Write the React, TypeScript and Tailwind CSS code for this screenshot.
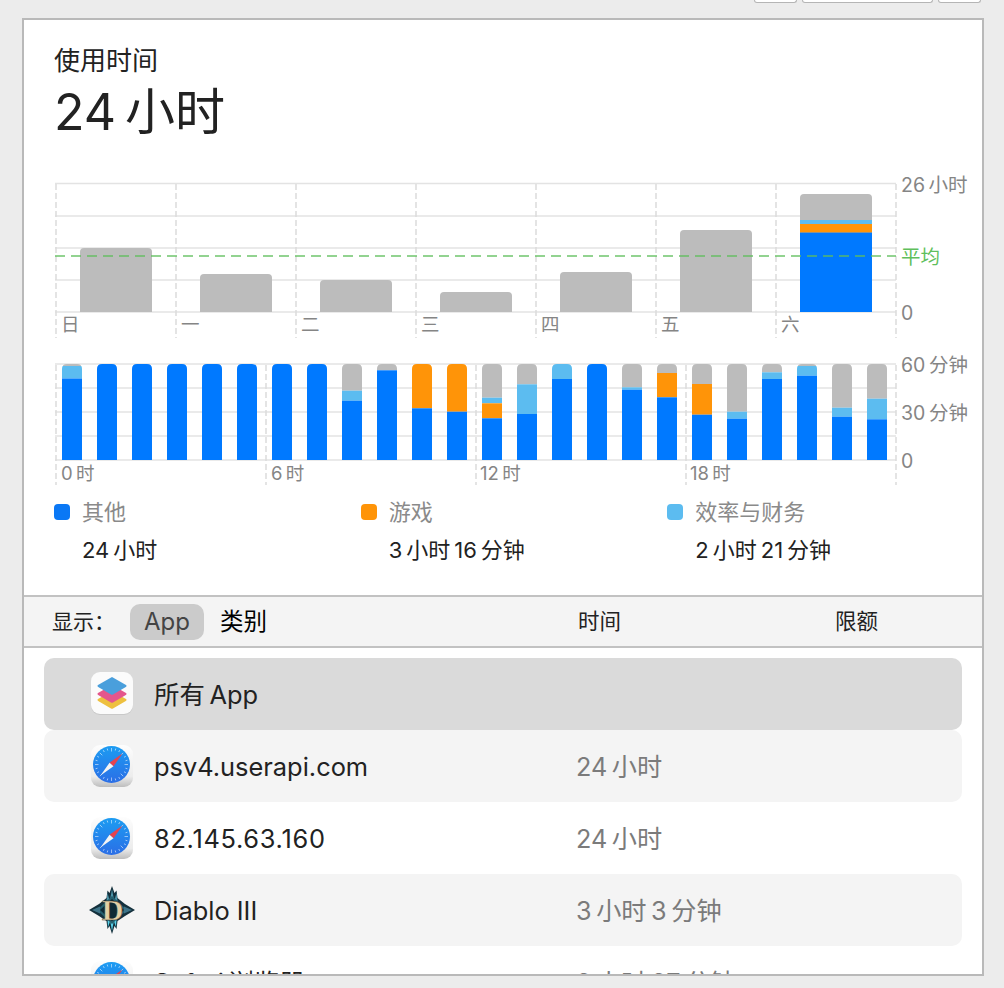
import React from "react";

const BLUE = "#0079ff";
const LB = "#5cbcf0";
const OR = "#ff9408";
const GR = "#bcbcbc";

const days = [248, 274, 280, 292, 272, 230];
const dayLabels = ["日", "一", "二", "三", "四", "五", "六"];

// Each hour bar: list of [color, bottom y] from the top (364) down, then blue to 460
const hours: [string, number][][] = [
  [[GR, 366], [LB, 378.5]],
  [], [], [], [], [], [], [],
  [[GR, 390.7], [LB, 400.7]],
  [[GR, 370.3]],
  [[OR, 408.3]],
  [[OR, 411.7]],
  [[GR, 397.7], [LB, 403.3], [OR, 418.3]],
  [[GR, 384.3], [LB, 414]],
  [[LB, 379]],
  [],
  [[GR, 387.3], [LB, 389.7]],
  [[GR, 373], [OR, 397.3]],
  [[GR, 384], [OR, 414.7]],
  [[GR, 411.7], [LB, 418.7]],
  [[GR, 372.3], [LB, 379]],
  [[GR, 366], [LB, 375.7]],
  [[GR, 407.7], [LB, 416.7]],
  [[GR, 398.7], [LB, 419.3]],
];

function topRounded(x: number, y: number, w: number, bottom: number, r: number) {
  return `M${x} ${bottom}V${y + r}Q${x} ${y} ${x + r} ${y}H${x + w - r}Q${x + w} ${y} ${x + w} ${y + r}V${bottom}Z`;
}

function Charts() {
  const H = (y: number, key: string) => (
    <line key={key} x1={55} x2={896} y1={y} y2={y} stroke="#e3e3e3" strokeWidth={1.5} />
  );
  const V = (x: number, y1: number, y2: number, key: string) => (
    <line key={key} x1={x} x2={x} y1={y1} y2={y2} stroke="#dcdcdc" strokeWidth={1.5} strokeDasharray="6 3" />
  );
  return (
    <svg viewBox="24 175 958 315" width={958} height={315} className="block mt-[33px]">
      {[183.5, 216, 248, 280, 312].map((y) => H(y, `d${y}`))}
      {[56, 176, 296, 416, 536, 656, 776, 896].map((x) => V(x, 184, 338, `dv${x}`))}
      {days.map((top, i) => (
        <path key={i} d={topRounded(80 + i * 120, top, 72, 312, 4)} fill={GR} />
      ))}
      <path d={topRounded(800, 194, 72, 312, 4)} fill={GR} />
      <rect x={800} y={220} width={72} height={4} fill={LB} />
      <rect x={800} y={224} width={72} height={8.6} fill={OR} />
      <rect x={800} y={232.6} width={72} height={79.4} fill={BLUE} />
      <line x1={55} x2={896} y1={256} y2={256} stroke="#5fbf5c" strokeOpacity={0.9} strokeWidth={1.5} strokeDasharray="10 6" />
      {dayLabels.map((t, i) => (
        <text key={t} x={61 + i * 120} y={331} fontSize={18.5} fill="#858585">{t}</text>
      ))}
      <text x={901} y={192} fontSize={19.5} fill="#858585">26{"\u2009"}小时</text>
      <text x={901} y={264} fontSize={19.5} fill="#5fbf5c">平均</text>
      <text x={901} y={320} fontSize={19.5} fill="#858585">0</text>

      {[364, 388, 412, 436, 460].map((y) => H(y, `h${y}`))}
      {[56, 266, 476, 686, 896].map((x) => V(x, 365, 485, `hv${x}`))}
      {hours.map((segs, i) => {
        const x = 62 + i * 35;
        const clip = `bar${i}`;
        let y = 364;
        return (
          <g key={i}>
            <clipPath id={clip}><path d={topRounded(x, 364, 20, 460, 5)} /></clipPath>
            <g clipPath={`url(#${clip})`}>
              {segs.map(([c, b], j) => {
                const r = <rect key={j} x={x} y={y} width={20} height={b - y} fill={c} />;
                y = b;
                return r;
              })}
              <rect x={x} y={y} width={20} height={460 - y} fill={BLUE} />
            </g>
          </g>
        );
      })}
      {[["0", 61], ["6", 271], ["12", 480], ["18", 690]].map(([t, x]) => (
        <text key={t} x={x as number} y={480} fontSize={18.5} fill="#858585">{t}{"\u2009"}时</text>
      ))}
      <text x={901} y={372} fontSize={19.5} fill="#858585">60{"\u2009"}分钟</text>
      <text x={901} y={420} fontSize={19.5} fill="#858585">30{"\u2009"}分钟</text>
      <text x={901} y={468} fontSize={19.5} fill="#858585">0</text>
    </svg>
  );
}

function Legend({ color, name, value }: { color: string; name: string; value: string }) {
  return (
    <div>
      <div className="flex items-center gap-[12px] h-[38px]">
        <div className="w-[16px] h-[16px] rounded-[4px]" style={{ background: color }} />
        <span className="text-[22px] leading-[38px] text-[#8a8a8a]">{name}</span>
      </div>
      <div className="pl-[28px] text-[22px] leading-[38px] text-[#222222]">{value}</div>
    </div>
  );
}

function StackIcon() {
  return (
    <svg width={42} height={44} viewBox="0 0 42 44" className="block">
      <rect x={0} y={1} width={42} height={42} rx={9} fill="#c2c2c2" opacity={0.7} />
      <rect x={0} y={0} width={42} height={42} rx={9} fill="#fbfbfb" />
      <path d="M21 19l14 8q1.500 1-.2 2L22 36.500q-1 .6-2 0L7.200 29q-1.700-1-.2-2z" fill="#eec03f" />
      <path d="M21 13l14 8q1.500 1-.2 2L22 30.500q-1 .6-2 0L7.200 23q-1.700-1-.2-2z" fill="#e4568c" />
      <path d="M21 5l14 8q1.500 1-.2 2L22 22.500q-1 .6-2 0L7.200 15q-1.700-1-.2-2z" fill="#4a9fdc" />
    </svg>
  );
}

function SafariIcon() {
  const ticks = Array.from({ length: 24 }, (_, i) => i * 15);
  return (
    <svg width={42} height={44} viewBox="0 0 42 44" className="block">
      <defs>
        <linearGradient id="safBase" x1="0" y1="0" x2="0" y2="1">
          <stop offset="0" stopColor="#fdfdfd" />
          <stop offset="0.75" stopColor="#ececec" />
          <stop offset="1" stopColor="#bdbdbd" />
        </linearGradient>
        <linearGradient id="safBlue" x1="0" y1="0" x2="0" y2="1">
          <stop offset="0" stopColor="#1c9cf2" />
          <stop offset="1" stopColor="#2b6ee6" />
        </linearGradient>
      </defs>
      <rect x={0} y={1} width={42} height={42} rx={9} fill="url(#safBase)" />
      <circle cx={20.500} cy={20.500} r={18.500} fill="url(#safBlue)" />
      {ticks.map((a) => (
        <line key={a} x1={20.500} y1={4} x2={20.500} y2={a % 45 === 0 ? 7.500 : 6} stroke="#ffffff" strokeOpacity={0.75} strokeWidth={0.7} transform={`rotate(${a} 20.500 20.500)`} />
      ))}
      <path d="M31.500 9.500L18.500 18.700 22.500 22.300z" fill="#e5434f" />
      <path d="M9.500 31.500L18.500 18.700 22.500 22.300z" fill="#f4f4f4" />
    </svg>
  );
}

function DiabloIcon() {
  return (
    <svg width={48} height={50} viewBox="0 0 48 50" className="block -ml-[3px] -mr-[3px]">
      <path d="M24 1l2.500 7 2-2.500 1 7.500L37 19l10 6-10 6-7.500 5-1 8-2-3L24 49l-2.500-8-2 3-1-8L11 31 1 25l10-6 7.500-6 1-7.500 2 2.500z" fill="#14303c" />
      <path d="M19.500 8l2 7-3 1zM28.500 8l-2 7 3 1zM24 4l2 11h-4z" fill="#4e94a8" />
      <path d="M24 46l-2-11h4zM20 42l-.5-8 3 1zM28 42l.5-8-3 1z" fill="#58d0e8" />
      <path d="M24 11l15 14-15 14L9 25z" fill="#24606f" />
      <path d="M4 25l8-3.500v7zM44 25l-8-3.500v7z" fill="#3f7488" />
      <path d="M24 14l12 11-12 11-12-11z" fill="#0f2a35" />
      <text x={24.500} y={35} textAnchor="middle" fontSize={30} fontWeight={700} fill="#e2d0a6" stroke="#3a2c1c" strokeWidth={0.4} style={{ fontFamily: "'Liberation Serif', serif" }}>D</text>
    </svg>
  );
}

function Row({ bg, icon, name, time, nameClass = "" }: { bg: string; icon: React.ReactNode; name: string; time?: string; nameClass?: string }) {
  return (
    <div className={`flex items-center h-[72px] rounded-[10px] ${bg}`}>
      <div className="ml-[47px] w-[42px] flex justify-center shrink-0">{icon}</div>
      <div className={`ml-[21px] w-[422px] shrink-0 pt-[3px] text-[25.400px] text-[#222222] whitespace-nowrap ${nameClass}`}>{name}</div>
      {time && <div className="pt-[3px] text-[25.200px] text-[#7b7b7b] whitespace-nowrap">{time}</div>}
    </div>
  );
}

export default function App() {
  return (
    <div className="w-[1004px] h-[988px] overflow-hidden bg-[#ececec] font-['Inter','Noto_Sans_CJK_SC',sans-serif]">
      <div className="h-[18px]">
        <div className="flex justify-end gap-[5px] pr-[23px]">
          <div className="w-[43px] h-[3px] bg-white border border-t-0 border-[#b5b5b5] rounded-b-[6px]" />
          <div className="w-[131px] h-[3px] bg-white border border-t-0 border-[#b5b5b5] rounded-b-[6px]" />
          <div className="w-[43px] h-[3px] bg-white border border-t-0 border-[#b5b5b5] rounded-b-[6px]" />
        </div>
      </div>
      <div className="ml-[22px] w-[962px] h-[958px] border-2 border-[#b9b9b9] bg-white overflow-hidden">
        <section className="h-[575px] pt-[24px]">
          <div className="pl-[30px] text-[26px] leading-[34px] text-[#222222]">使用时间</div>
          <div className="pl-[30px] mt-[4px] text-[50px] leading-[60px] text-[#222222]">24{"\u2009"}小时</div>
          <Charts />
          <div className="ml-[30px] w-[920px] grid grid-cols-3 mt-[3px]">
            <Legend color="#0a78f5" name="其他" value={"24\u2009小时"} />
            <Legend color={OR} name="游戏" value={"3\u2009小时\u200916\u2009分钟"} />
            <Legend color={LB} name="效率与财务" value={"2\u2009小时\u200921\u2009分钟"} />
          </div>
        </section>
        <div className="h-[53px] flex items-center border-y-2 border-[#c2c2c2] bg-[#f4f4f4] text-[#222222]">
          <span className="ml-[28px] w-[78px] text-[21px]">显示：</span>
          <span className="w-[74px] h-[36px] rounded-[10px] bg-[#cbcbcb] flex items-center justify-center text-[24px] text-[#444444]">App</span>
          <span className="ml-[16px] w-[358px] text-[23.500px] text-black">类别</span>
          <span className="w-[257px] text-[21.500px]">时间</span>
          <span className="text-[21.500px]">限额</span>
        </div>
        <div className="px-[20px] pt-[10px]">
          <Row bg="bg-[#dadada]" icon={<StackIcon />} name={"所有\u2009App"} />
          <Row bg="bg-[#f4f4f4]" icon={<SafariIcon />} name="psv4.userapi.com" time={"24\u2009小时"} />
          <Row bg="bg-white" icon={<SafariIcon />} name="82.145.63.160" nameClass="tracking-[0.7px]" time={"24\u2009小时"} />
          <Row bg="bg-[#f4f4f4]" icon={<DiabloIcon />} name="Diablo III" time={"3\u2009小时\u20093\u2009分钟"} />
          <Row bg="bg-white" icon={<SafariIcon />} name={"Safari\u2009浏览器"} time={"2\u2009小时\u200927\u2009分钟"} />
        </div>
      </div>
    </div>
  );
}
